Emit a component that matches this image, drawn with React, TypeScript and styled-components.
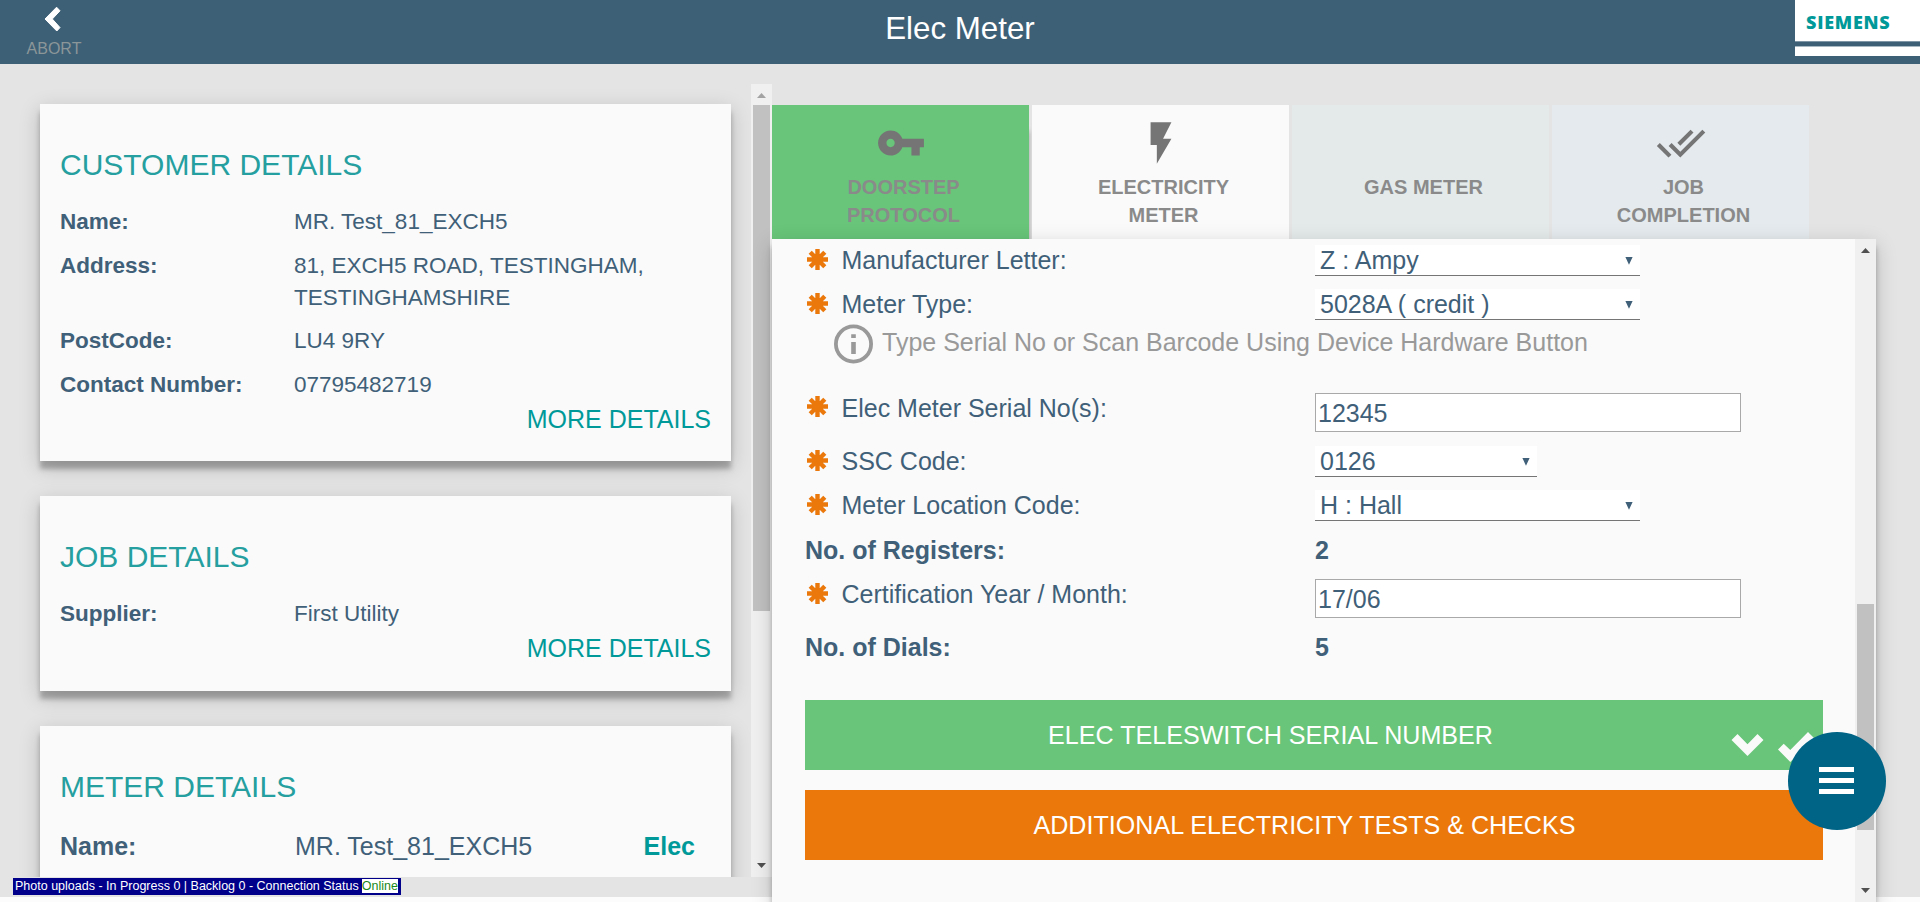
import React from "react";
import styled, { createGlobalStyle, css } from "styled-components";

const Global = createGlobalStyle`
  * { box-sizing: border-box; }
  html, body { margin: 0; padding: 0; overflow: hidden; background: #fcfcfc; }
  body { font-family: "Liberation Sans", Arial, Helvetica, sans-serif; color: #3f6078; }
`;

const raised = css`
  box-shadow: 0 8px 5px rgba(0, 0, 0, 0.25), 0 6px 20px rgba(0, 0, 0, 0.19);
`;

const Page = styled.div`
  position: relative;
  width: 1920px;
  height: 902px;
  overflow: hidden;
`;

const Header = styled.header`
  height: 64px;
  background: #3e6076;
  display: grid;
  grid-template-columns: 125px 1fr 125px;
`;

const Abort = styled.div`
  display: flex;
  flex-direction: column;
  align-items: center;
  width: 108px;
  padding-top: 6px;
  color: #8b9699;
  font-size: 16px;
  line-height: 20px;
  svg { margin: 0 4px 7px 0; }
`;

const Title = styled.h1`
  margin: 0;
  font-size: 31.3px;
  font-weight: 400;
  line-height: 58px;
  text-align: center;
  color: #fff;
`;

const Logo = styled.div`
  height: 56px;
  background: #fff;
  display: flex;
  flex-direction: column;
`;

const LogoName = styled.div`
  height: 41px;
  padding-left: 11px;
  font-family: "Open Sans", "Noto Sans", sans-serif;
  font-weight: 800;
  font-size: 18px;
  letter-spacing: 0.75px;
  line-height: 45px;
  color: #009999;
`;

const LogoStripe = styled.div`
  height: 6px;
  background: #3e6076;
  border-top: 1px solid #7d95a5;
  border-bottom: 1px solid #a9b9c4;
`;

const Main = styled.main`
  height: 833px;
  background: #e4e4e4;
  display: flex;
`;

const LeftPane = styled.section`
  width: 772px;
  height: 793px;
  margin-top: 20px;
  display: flex;
  overflow: hidden;
`;

const Cards = styled.div`
  width: 751px;
  height: 793px;
  padding: 20px 20px 0 40px;
  overflow: hidden;
`;

const Card = styled.article<{ $height: number }>`
  height: ${(p) => p.$height}px;
  margin-bottom: 35px;
  padding: 41px 20px 0;
  background: #fafafa;
  ${raised}
`;

const CardTitle = styled.h2`
  margin: 0 0 21px;
  font-size: 30px;
  line-height: 40px;
  font-weight: 400;
  color: #259f9f;
`;

const Detail = styled.div<{ $large?: boolean }>`
  display: grid;
  grid-template-columns: ${(p) => (p.$large ? 235 : 234)}px 1fr auto;
  margin-bottom: 11.5px;
  padding-top: ${(p) => (p.$large ? 2 : 0)}px;
  font-size: ${(p) => (p.$large ? 25 : 22.5)}px;
  line-height: 32px;
`;

const Fuel = styled.b`
  padding-right: 16px;
  color: #009999;
`;

const More = styled.a`
  display: block;
  margin-top: -9.5px;
  text-align: right;
  font-size: 25px;
  line-height: 32px;
  color: #009999;
`;

const Scrollbar = styled.div`
  width: 21px;
  height: 100%;
  flex: none;
  background: #f0f0f0;
  display: flex;
  flex-direction: column;
  align-items: center;
`;

const ScrollButton = styled.div<{ $off?: boolean; $down?: boolean }>`
  height: 21px;
  flex: none;
  padding: ${(p) => (p.$down ? "0 0 2px" : "2px 0 0")};
  display: flex;
  align-items: center;
  color: ${(p) => (p.$off ? "#a3a3a3" : "#505050")};
  svg { display: block; }
`;

const Track = styled.div<{ $before: number }>`
  flex: 1;
  width: 17px;
  padding-top: ${(p) => p.$before}px;
`;

const Thumb = styled.div<{ $height: number }>`
  height: ${(p) => p.$height}px;
  background: #c1c1c1;
`;

const RightPane = styled.section`
  width: 1104px;
  height: 838px;
  padding-top: 41px;
`;

const Tabs = styled.nav`
  display: flex;
  gap: 3px;
  height: 134px;
`;

const Tab = styled.div<{ $bg: string; $done?: boolean }>`
  width: 257px;
  padding-top: 13px;
  display: flex;
  flex-direction: column;
  align-items: center;
  background: ${(p) => p.$bg};
  ${(p) => p.$done && "box-shadow: 5px 21px 5px -5px rgba(0,0,0,.3);"}
`;

const TabIcon = styled.div`
  height: 50px;
  margin-bottom: 5px;
  color: #757575;
  svg { display: block; }
`;

const TabLabel = styled.div`
  width: 150px;
  margin-left: 6px;
  text-align: center;
  font-size: 20px;
  font-weight: 700;
  line-height: 28px;
  color: #8a8a8a;
`;

const Panel = styled.div`
  position: relative;
  height: 663px;
  display: flex;
  background: #fafafa;
  ${raised}
`;

const Form = styled.div`
  flex: 1;
  padding: 5px 32px 0 33px;
`;

const Field = styled.div<{ $height: number; $strong?: boolean }>`
  display: grid;
  grid-template-columns: ${(p) => (p.$strong ? "510px" : "36.5px 473.5px")} 1fr;
  align-items: start;
  height: ${(p) => p.$height}px;
  font-size: 25px;
  line-height: 32px;
  font-weight: ${(p) => (p.$strong ? 700 : 400)};
  svg.star { display: block; margin: 5px 0 0 1.5px; }
`;

const FieldLabel = styled.span<{ $drop?: boolean }>`
  padding-top: ${(p) => (p.$drop ? 1 : 0)}px;
`;

const Select = styled.div<{ $width: number }>`
  width: ${(p) => p.$width}px;
  height: 31px;
  margin-top: 1px;
  padding: 0 7.5px 0 5px;
  display: flex;
  justify-content: space-between;
  background: #fff;
  border-bottom: 1px solid #757575;
  line-height: 30px;
  svg { margin-top: 11.5px; }
`;

const Input = styled.div<{ $top: number }>`
  width: 426px;
  height: 39px;
  margin-top: ${(p) => p.$top}px;
  padding: 1px 0 0 2px;
  background: #fff;
  border: 1px solid #a9a9a9;
  line-height: 37px;
`;

const Hint = styled.div`
  display: flex;
  height: 67px;
  padding-left: 29px;
  font-size: 25px;
  line-height: 36px;
  color: #999;
  svg { margin-right: 9px; }
`;

const Action = styled.div<{ $bg: string; $pad?: number }>`
  height: 70px;
  margin-bottom: 20px;
  padding-right: ${(p) => p.$pad ?? 0}px;
  display: flex;
  background: ${(p) => p.$bg};
  color: #fff;
  font-size: 25.1px;
  line-height: 70px;
`;

const ActionLabel = styled.div<{ $indent?: number }>`
  flex: 1;
  padding-left: ${(p) => p.$indent ?? 0}px;
  text-align: center;
`;

const ActionMarks = styled.div`
  display: flex;
  gap: 14px;
  padding: 32px 9px 0 0;
`;

const MenuButton = styled.div`
  position: absolute;
  left: 1788px;
  top: 732px;
  width: 97.5px;
  height: 97.5px;
  border-radius: 50%;
  background: #006487;
  display: flex;
  flex-direction: column;
  align-items: center;
  justify-content: center;
  gap: 6px;
`;

const MenuBar = styled.span`
  width: 35px;
  height: 5px;
  margin-right: 1px;
  background: #fff;
`;

const UploadStatus = styled.div`
  position: absolute;
  left: 13px;
  top: 878px;
  height: 17px;
  padding: 0 3px 0 2px;
  display: flex;
  gap: 3px;
  background: #00008b;
  color: #fff;
  font-size: 12.5px;
  line-height: 16px;
  white-space: nowrap;
`;

const Online = styled.span`
  height: 14px;
  margin-top: 1px;
  line-height: 14px;
  background: #fff;
  color: #1b8a1b;
`;

const Arrow = ({ up }: { up?: boolean }) => (
  <svg width="9" height="5" viewBox="0 0 9 5" fill="currentColor">
    <path d={up ? "M4.5 0L9 5H0z" : "M0 0h9L4.5 5z"} />
  </svg>
);

const Bar = ({ before, height, topOff }: { before: number; height: number; topOff?: boolean }) => (
  <Scrollbar>
    <ScrollButton $off={topOff}><Arrow up /></ScrollButton>
    <Track $before={before}><Thumb $height={height} /></Track>
    <ScrollButton $down><Arrow /></ScrollButton>
  </Scrollbar>
);

const Star = () => (
  <svg className="star" width="21" height="21" viewBox="-10.5 -10.5 21 21" stroke="#ea780b" strokeWidth="4.4">
    <path d="M0-10.5V10.5M-10.5 0H10.5M-7.300-7.300L7.300 7.300M7.300-7.300L-7.300 7.300" />
  </svg>
);

const Caret = () => (
  <svg width="8" height="8" viewBox="0 0 8 8" fill="#3f6078"><path d="M.4 0h7.200L4 7.800z" /></svg>
);

const Glyph = ({ d }: { d: string }) => (
  <svg width="50" height="50" viewBox="0 0 24 24" fill="currentColor"><path d={d} /></svg>
);

const KEY = "M12.65 10C11.83 7.67 9.61 6 7 6c-3.31 0-6 2.69-6 6s2.69 6 6 6c2.61 0 4.83-1.67 5.65-4H17v4h4v-4h2v-4H12.65zM7 14c-1.1 0-2-.9-2-2s.9-2 2-2 2 .9 2 2-.9 2-2 2z";
const BOLT = "M7 2v11h3v9l7-12h-4l4-8z";
const DONE = "M18 7l-1.41-1.41-6.34 6.34 1.41 1.41L18 7zm4.24-1.41L11.66 16.17 7.48 12l-1.41 1.41L11.66 19l12-12-1.42-1.41zM.41 13.41L6 19l1.41-1.41L1.83 12 .41 13.41z";

const Choice = ({ label, value, width, height = 44 }: { label: string; value: string; width: number; height?: number }) => (
  <Field $height={height}>
    <Star />
    <FieldLabel>{label}</FieldLabel>
    <Select $width={width}>{value}<Caret /></Select>
  </Field>
);

export default function App() {
  return (
    <Page>
      <Global />
      <Header>
        <Abort>
          <svg width="17" height="26" viewBox="0 0 17 26" fill="#fff" stroke="#fff" strokeLinejoin="round">
            <path d="M1 13L12.6 1.2 16 4.8 8.3 13 16 21.6 12.8 25z" />
          </svg>
          <span>ABORT</span>
        </Abort>
        <Title>Elec Meter</Title>
        <Logo>
          <LogoName>SIEMENS</LogoName>
          <LogoStripe />
        </Logo>
      </Header>
      <Main>
        <LeftPane>
          <Cards>
            <Card $height={357}>
              <CardTitle>CUSTOMER DETAILS</CardTitle>
              <Detail><b>Name:</b><span>MR. Test_81_EXCH5</span></Detail>
              <Detail><b>Address:</b><span>81, EXCH5 ROAD, TESTINGHAM,<br />TESTINGHAMSHIRE</span></Detail>
              <Detail><b>PostCode:</b><span>LU4 9RY</span></Detail>
              <Detail><b>Contact Number:</b><span>07795482719</span></Detail>
              <More>MORE DETAILS</More>
            </Card>
            <Card $height={195}>
              <CardTitle>JOB DETAILS</CardTitle>
              <Detail><b>Supplier:</b><span>First Utility</span></Detail>
              <More>MORE DETAILS</More>
            </Card>
            <Card $height={195}>
              <CardTitle>METER DETAILS</CardTitle>
              <Detail $large><b>Name:</b><span>MR. Test_81_EXCH5</span><Fuel>Elec</Fuel></Detail>
            </Card>
          </Cards>
          <Bar before={0} height={506} topOff />
        </LeftPane>
        <RightPane>
          <Tabs>
            <Tab $bg="#68c579" $done>
              <TabIcon><Glyph d={KEY} /></TabIcon>
              <TabLabel>DOORSTEP PROTOCOL</TabLabel>
            </Tab>
            <Tab $bg="#fafafa">
              <TabIcon><Glyph d={BOLT} /></TabIcon>
              <TabLabel>ELECTRICITY METER</TabLabel>
            </Tab>
            <Tab $bg="#e4eaea">
              <TabIcon />
              <TabLabel>GAS METER</TabLabel>
            </Tab>
            <Tab $bg="#e4eaed">
              <TabIcon><Glyph d={DONE} /></TabIcon>
              <TabLabel>JOB COMPLETION</TabLabel>
            </Tab>
          </Tabs>
          <Panel>
            <Form>
              <Choice label="Manufacturer Letter:" value="Z : Ampy" width={325} />
              <Choice label="Meter Type:" value="5028A ( credit )" width={325} height={36} />
              <Hint>
                <svg width="39" height="40" viewBox="0 0 39 40" fill="#999">
                  <circle cx="19.5" cy="20" r="17.6" fill="none" stroke="#999" strokeWidth="3.8" />
                  <path d="M17.200 10.200h4.600v3.800h-4.600zM17.200 18h4.600v12h-4.600z" />
                </svg>
                Type Serial No or Scan Barcode Using Device Hardware Button
              </Hint>
              <Field $height={54}>
                <Star />
                <FieldLabel $drop>Elec Meter Serial No(s):</FieldLabel>
                <Input $top={2}>12345</Input>
              </Field>
              <Choice label="SSC Code:" value="0126" width={222} />
              <Choice label="Meter Location Code:" value="H : Hall" width={325} height={45} />
              <Field $height={44} $strong><span>No. of Registers:</span><span>2</span></Field>
              <Field $height={53}>
                <Star />
                <FieldLabel>Certification Year / Month:</FieldLabel>
                <Input $top={1}>17/06</Input>
              </Field>
              <Field $height={69} $strong><span>No. of Dials:</span><span>5</span></Field>
              <Action $bg="#68c579">
                <ActionLabel $indent={5}>ELEC TELESWITCH SERIAL NUMBER</ActionLabel>
                <ActionMarks>
                  <svg width="33" height="30" viewBox="0 0 33 30" fill="#fafafa"><path d="M.5 8l6-6 10 10.3L26.500 2l6 6-16 16z" /></svg>
                  <svg width="36" height="30" viewBox="0 0 36 30" fill="#fafafa"><path d="M0 17.500L5.700 11.700 12.300 18 30 0l6 6-23.700 24z" /></svg>
                </ActionMarks>
              </Action>
              <Action $bg="#ea780b" $pad={19}>
                <ActionLabel>ADDITIONAL ELECTRICITY TESTS &amp; CHECKS</ActionLabel>
              </Action>
            </Form>
            <Bar before={344} height={226} />
          </Panel>
        </RightPane>
      </Main>
      <MenuButton><MenuBar /><MenuBar /><MenuBar /></MenuButton>
      <UploadStatus>
        <span>Photo uploads - In Progress 0 | Backlog 0 - Connection Status</span>
        <Online>Online</Online>
      </UploadStatus>
    </Page>
  );
}
